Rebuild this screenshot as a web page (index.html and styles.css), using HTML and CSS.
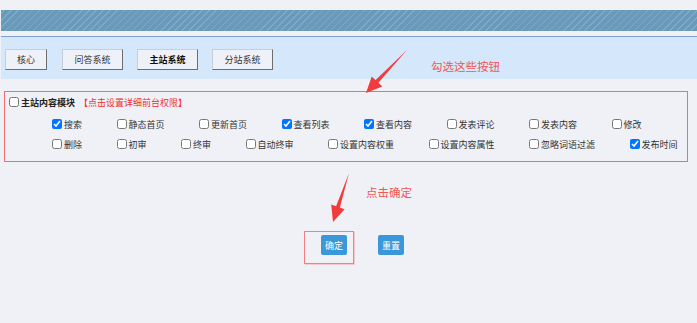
FILE: index.html
```html
<!DOCTYPE html>
<html lang="zh-CN">
<head>
    <meta charset="UTF-8">
    <title>权限设置</title>
    <link rel="stylesheet" href="styles.css">
</head>
<body>
<div class="page">
    <div class="stripe"></div>

    <div class="tabs_panel">
        <span class="tab">核心</span>
        <span class="tab">问答系统</span>
        <span class="tab tab_active">主站系统</span>
        <span class="tab">分站系统</span>
    </div>

    <div class="module">
        <div class="module_head">
            <label><input type="checkbox"><b>主站内容模块</b></label>
            <span class="module_hint">【点击设置详细前台权限】</span>
        </div>
        <div class="perm_row">
            <label class="perm"><input type="checkbox" checked>搜索</label>
            <label class="perm"><input type="checkbox">静态首页</label>
            <label class="perm"><input type="checkbox">更新首页</label>
            <label class="perm"><input type="checkbox" checked>查看列表</label>
            <label class="perm"><input type="checkbox" checked>查看内容</label>
            <label class="perm"><input type="checkbox">发表评论</label>
            <label class="perm"><input type="checkbox">发表内容</label>
            <label class="perm"><input type="checkbox">修改</label>
        </div>
        <div class="perm_row">
            <label class="perm"><input type="checkbox">删除</label>
            <label class="perm"><input type="checkbox">初审</label>
            <label class="perm"><input type="checkbox">终审</label>
            <label class="perm"><input type="checkbox">自动终审</label>
            <label class="perm"><input type="checkbox">设置内容权重</label>
            <label class="perm"><input type="checkbox">设置内容属性</label>
            <label class="perm"><input type="checkbox">忽略词语过滤</label>
            <label class="perm"><input type="checkbox" checked>发布时间</label>
        </div>
    </div>

    <div class="actions">
        <span class="btn">确定</span>
        <span class="btn">重置</span>
    </div>

    <!-- annotations drawn over the screenshot -->
    <div class="note note_check">勾选这些按钮</div>
    <div class="note note_ok">点击确定</div>
    <div class="mark_ok"></div>
    <svg class="arrows" width="697" height="323" viewBox="0 0 697 323">
        <polygon points="407,50 378.4,82.8 382.3,86.4 366,93 371.7,76.6 375.6,80" fill="#f43b3b"/>
        <polygon points="349,173 339.9,207.4 344.6,209.2 333,222 331.2,204.6 336.1,206.2" fill="#f43b3b"/>
    </svg>
</div>
</body>
</html>
```

FILE: styles.css
```css
body {
    margin: 0;
    padding: 0;
    background: #f0f1f6;
    font-family: "Noto Sans CJK SC", "Noto Sans", sans-serif;
    font-size: 9px;
    color: #333;
}

.page {
    position: relative;
    width: 697px;
    height: 323px;
    overflow: hidden;
}

.stripe {
    margin: 10px 0 0 1px;
    height: 21px;
    background: repeating-linear-gradient(-45deg, #6a9aba 0, #6a9aba 4px, #7faac7 4px, #7faac7 5px);
}

.tabs_panel {
    margin: 5px 0 0 1px;
    border-top: 1px solid #7b9fd1;
    background: #d5e7fb;
    height: 43px;
    padding: 12px 0 0 4px;
    box-sizing: border-box;
    display: flex;
    gap: 14px;
    align-items: flex-start;
}

.tab {
    display: flex;
    align-items: center;
    justify-content: center;
    width: 61px;
    height: 21px;
    box-sizing: border-box;
    background: #eef1f7;
    border: 1px solid #c9cdd5;
    border-right-color: #6e6e6e;
    border-bottom-color: #6e6e6e;
    color: #333;
}

.tab:first-child {
    width: 42px;
    margin-right: 1px;
}

.tab_active {
    font-weight: bold;
    color: #111;
}

.module {
    margin: 12px 0 0 4px;
    width: 684px;
    height: 71px;
    box-sizing: border-box;
    border: 1px solid #f06e6e;
    padding: 3px 0 0 4px;
}

.module_head {
    height: 14px;
    display: flex;
    align-items: center;
}

.module_head label {
    display: flex;
    align-items: center;
    color: #222;
}

.module_hint {
    color: #f22c2c;
    margin-left: 4px;
}

input[type=checkbox] {
    width: 10px;
    height: 10px;
    margin: 0 2px 0 0;
}

.perm_row {
    display: flex;
    align-items: center;
    height: 20px;
    padding-left: 43px;
}

.module_head + .perm_row {
    margin-top: 5px;
}

.perm {
    display: flex;
    align-items: center;
    margin-right: 34.5px;
    white-space: nowrap;
}

.actions {
    display: flex;
    gap: 31px;
    margin-top: 73px;
    padding-left: 321px;
}

.btn {
    width: 26px;
    height: 20px;
    border-radius: 2px;
    background: #3a97d9;
    color: #fff;
    display: flex;
    align-items: center;
    justify-content: center;
}

.note {
    position: absolute;
    color: #f05656;
    font-size: 11.5px;
    line-height: 14px;
}

.note_check {
    left: 431px;
    top: 59px;
}

.note_ok {
    left: 366px;
    top: 185px;
}

.mark_ok {
    position: absolute;
    left: 304px;
    top: 231px;
    width: 50px;
    height: 33px;
    box-sizing: border-box;
    border: 1px solid #f38080;
    box-shadow: 1px 1px 0 #f8c9c9;
}

.arrows {
    position: absolute;
    left: 0;
    top: 0;
    pointer-events: none;
}
```
